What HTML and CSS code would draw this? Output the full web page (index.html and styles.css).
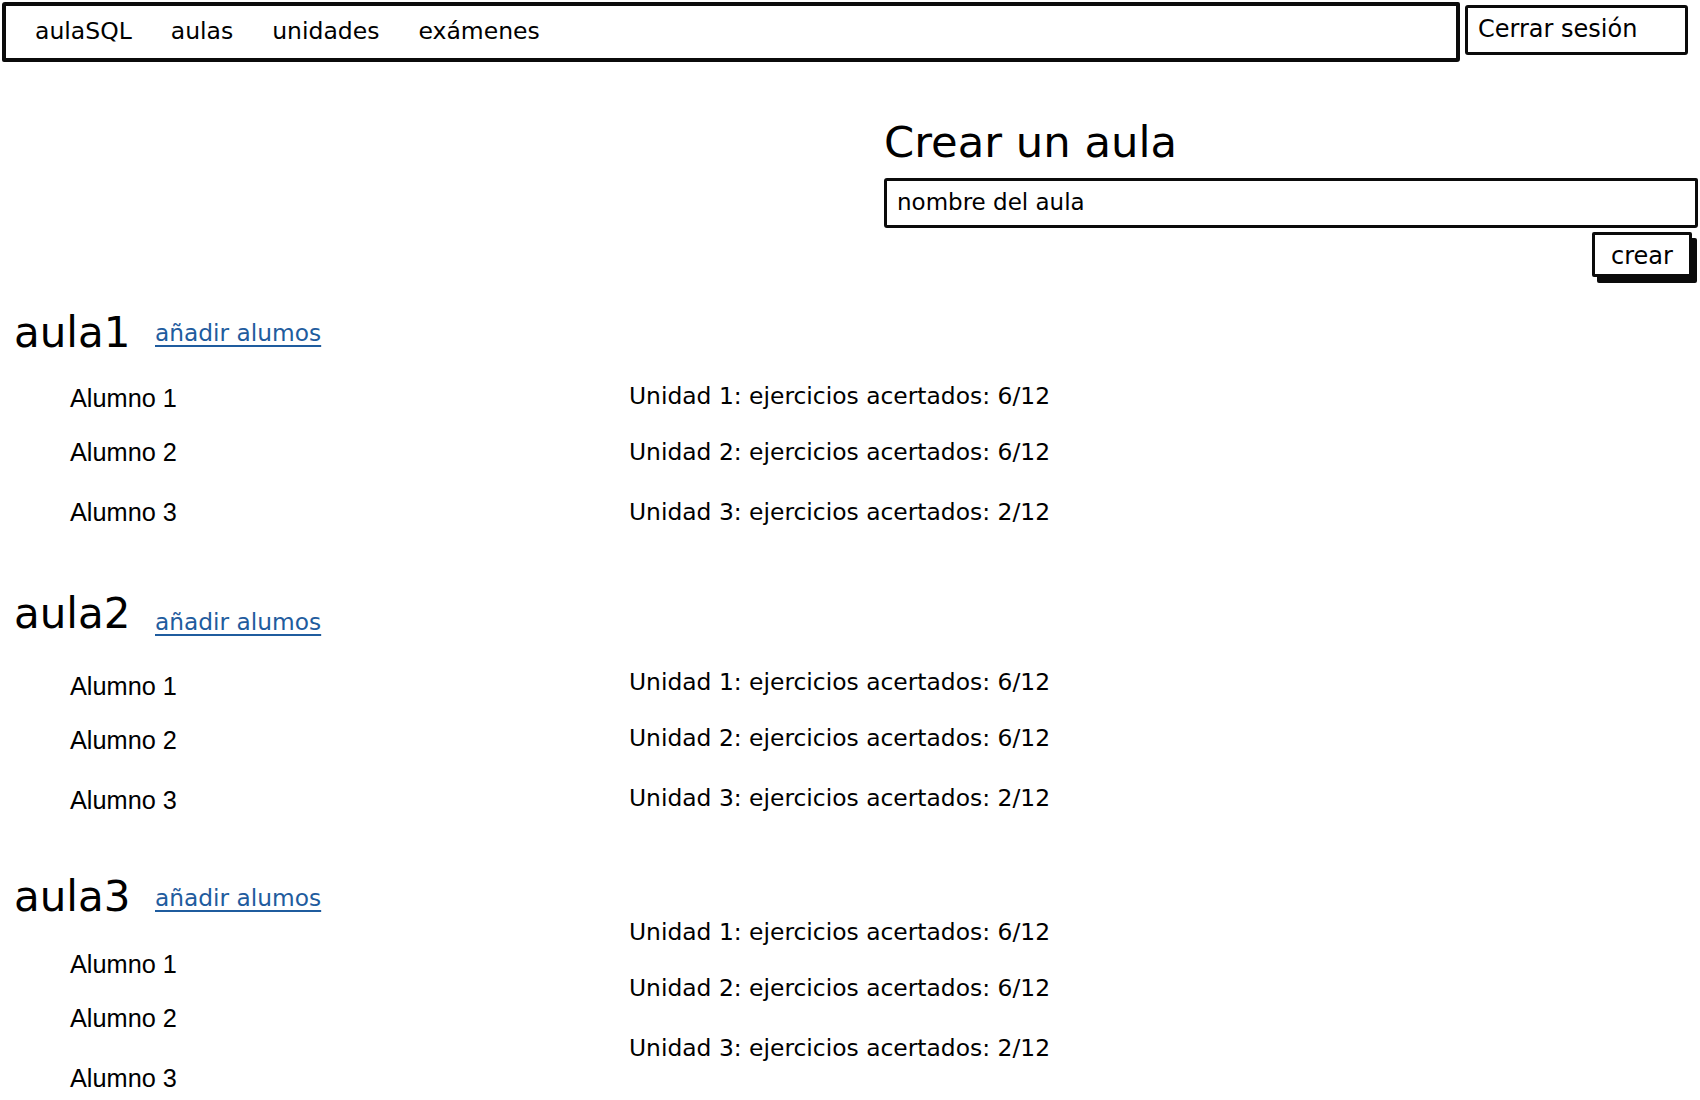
FILE: index.html
```html
<!DOCTYPE html>
<html lang="es">
<head>
<meta charset="utf-8">
<title>aulaSQL - aulas</title>
<link rel="stylesheet" href="styles.css">
</head>
<body>
<header class="topbar">
  <nav class="mainnav">
    <a class="nav-item" href="#">aulaSQL</a>
    <a class="nav-item" href="#">aulas</a>
    <a class="nav-item" href="#">unidades</a>
    <a class="nav-item" href="#">exámenes</a>
  </nav>
  <button class="logout" type="button">Cerrar sesión</button>
</header>

<main class="content">
  <section class="create">
    <h2 class="create-title">Crear un aula</h2>
    <div class="create-input">nombre del aula</div>
    <div class="create-actions">
      <button class="btn" type="button">crear</button>
    </div>
  </section>

  <section class="aula aula--1">
    <div class="aula-left">
      <div class="aula-head">
        <h3 class="aula-name">aula1</h3>
        <a class="aula-link" href="#">añadir alumos</a>
      </div>
      <ul class="alumnos">
        <li>Alumno 1</li>
        <li>Alumno 2</li>
        <li>Alumno 3</li>
      </ul>
    </div>
    <ul class="unidades">
      <li>Unidad 1: ejercicios acertados: 6/12</li>
      <li>Unidad 2: ejercicios acertados: 6/12</li>
      <li>Unidad 3: ejercicios acertados: 2/12</li>
    </ul>
  </section>

  <section class="aula aula--2">
    <div class="aula-left">
      <div class="aula-head">
        <h3 class="aula-name">aula2</h3>
        <a class="aula-link" href="#">añadir alumos</a>
      </div>
      <ul class="alumnos">
        <li>Alumno 1</li>
        <li>Alumno 2</li>
        <li>Alumno 3</li>
      </ul>
    </div>
    <ul class="unidades">
      <li>Unidad 1: ejercicios acertados: 6/12</li>
      <li>Unidad 2: ejercicios acertados: 6/12</li>
      <li>Unidad 3: ejercicios acertados: 2/12</li>
    </ul>
  </section>

  <section class="aula aula--3">
    <div class="aula-left">
      <div class="aula-head">
        <h3 class="aula-name">aula3</h3>
        <a class="aula-link" href="#">añadir alumos</a>
      </div>
      <ul class="alumnos">
        <li>Alumno 1</li>
        <li>Alumno 2</li>
        <li>Alumno 3</li>
      </ul>
    </div>
    <ul class="unidades">
      <li>Unidad 1: ejercicios acertados: 6/12</li>
      <li>Unidad 2: ejercicios acertados: 6/12</li>
      <li>Unidad 3: ejercicios acertados: 2/12</li>
    </ul>
  </section>
</main>
</body>
</html>
```

FILE: styles.css
```css
* {
  box-sizing: border-box;
}

html, body {
  margin: 0;
  padding: 0;
  background: #ffffff;
  color: #000000;
  font-family: "DejaVu Sans", "Noto Sans", sans-serif;
}

body {
  width: 1700px;
  height: 1100px;
  overflow: hidden;
}

/* ---------- top bar ---------- */
.topbar {
  display: flex;
  align-items: flex-start;
  padding: 2px 0 0 2px;
}

.mainnav {
  width: 1458px;
  height: 60px;
  border: 4px solid #0b0b0b;
  border-radius: 3px 2px 3px 2px;
  display: flex;
  align-items: center;
  gap: 39px;
  padding: 0 0 2px 29px;
}

.nav-item {
  font-size: 23.5px;
  color: #000;
  text-decoration: none;
}

.logout {
  margin: 3px 0 0 5px;
  width: 223px;
  height: 50px;
  border: 3px solid #0b0b0b;
  border-radius: 3px;
  background: #fff;
  font-family: "DejaVu Sans", sans-serif;
  font-size: 24px;
  color: #000;
  text-align: left;
  padding: 0 0 3px 10px;
}

/* ---------- create form ---------- */
.create {
  margin: 55px 0 0 884px;
  width: 814px;
}

.create-title {
  margin: 0;
  font-size: 43.3px;
  font-weight: normal;
  line-height: 50px;
}

.create-input {
  margin-top: 11px;
  height: 50px;
  border: 3px solid #0b0b0b;
  border-radius: 3px 2px 3px 3px;
  font-size: 23px;
  display: flex;
  align-items: center;
  padding: 0 0 2px 10px;
}

.create-actions {
  display: flex;
  justify-content: flex-end;
  padding-right: 6px;
}

.btn {
  margin-top: 4px;
  width: 100px;
  height: 45px;
  border: 3px solid #0b0b0b;
  border-radius: 2px;
  background: #fff;
  box-shadow: 5px 6px 0 #0b0b0b;
  font-family: "DejaVu Sans", sans-serif;
  font-size: 24px;
  color: #000;
  padding: 3px 0 0 0;
}

/* ---------- aula sections ---------- */
.aula {
  display: grid;
  grid-template-columns: 629px 1fr;
  align-items: start;
  margin-top: var(--sec-top);
}

.aula--1 {
  --sec-top: 32px;
  --list-top: 26px;
  --units-top: 72px;
  --link-shift: 0px;
}

.aula--2 {
  --sec-top: 63px;
  --list-top: 33px;
  --units-top: 77px;
  --link-shift: 15px;
}

.aula--3 {
  --sec-top: 58px;
  --list-top: 28px;
  --units-top: 44px;
  --link-shift: 2px;
}

.aula-head {
  display: flex;
  align-items: center;
  height: 48px;
}

.aula-name {
  flex: 0 0 155px;
  margin: 0;
  padding-left: 14px;
  font-size: 42px;
  font-weight: normal;
  line-height: 48px;
}

.aula-link {
  font-size: 23.3px;
  line-height: 30px;
  color: #1f5c9e;
  text-decoration: underline;
  text-decoration-thickness: 2px;
  text-underline-offset: 4px;
  margin-top: var(--link-shift);
}

.alumnos,
.unidades {
  list-style: none;
  margin: 0;
  padding: 0;
}

.alumnos {
  margin-top: var(--list-top);
  padding-left: 70px;
  font-family: "Liberation Sans", Arial, sans-serif;
  font-size: 25.3px;
  line-height: 30px;
}

.alumnos li + li {
  margin-top: 24px;
}

.alumnos li:nth-child(3) {
  margin-top: 30px;
}

.unidades {
  padding-top: var(--units-top);
  font-size: 23.4px;
  line-height: 30px;
}

.unidades li + li {
  margin-top: 26px;
}

.unidades li:nth-child(3) {
  margin-top: 30px;
}
```
